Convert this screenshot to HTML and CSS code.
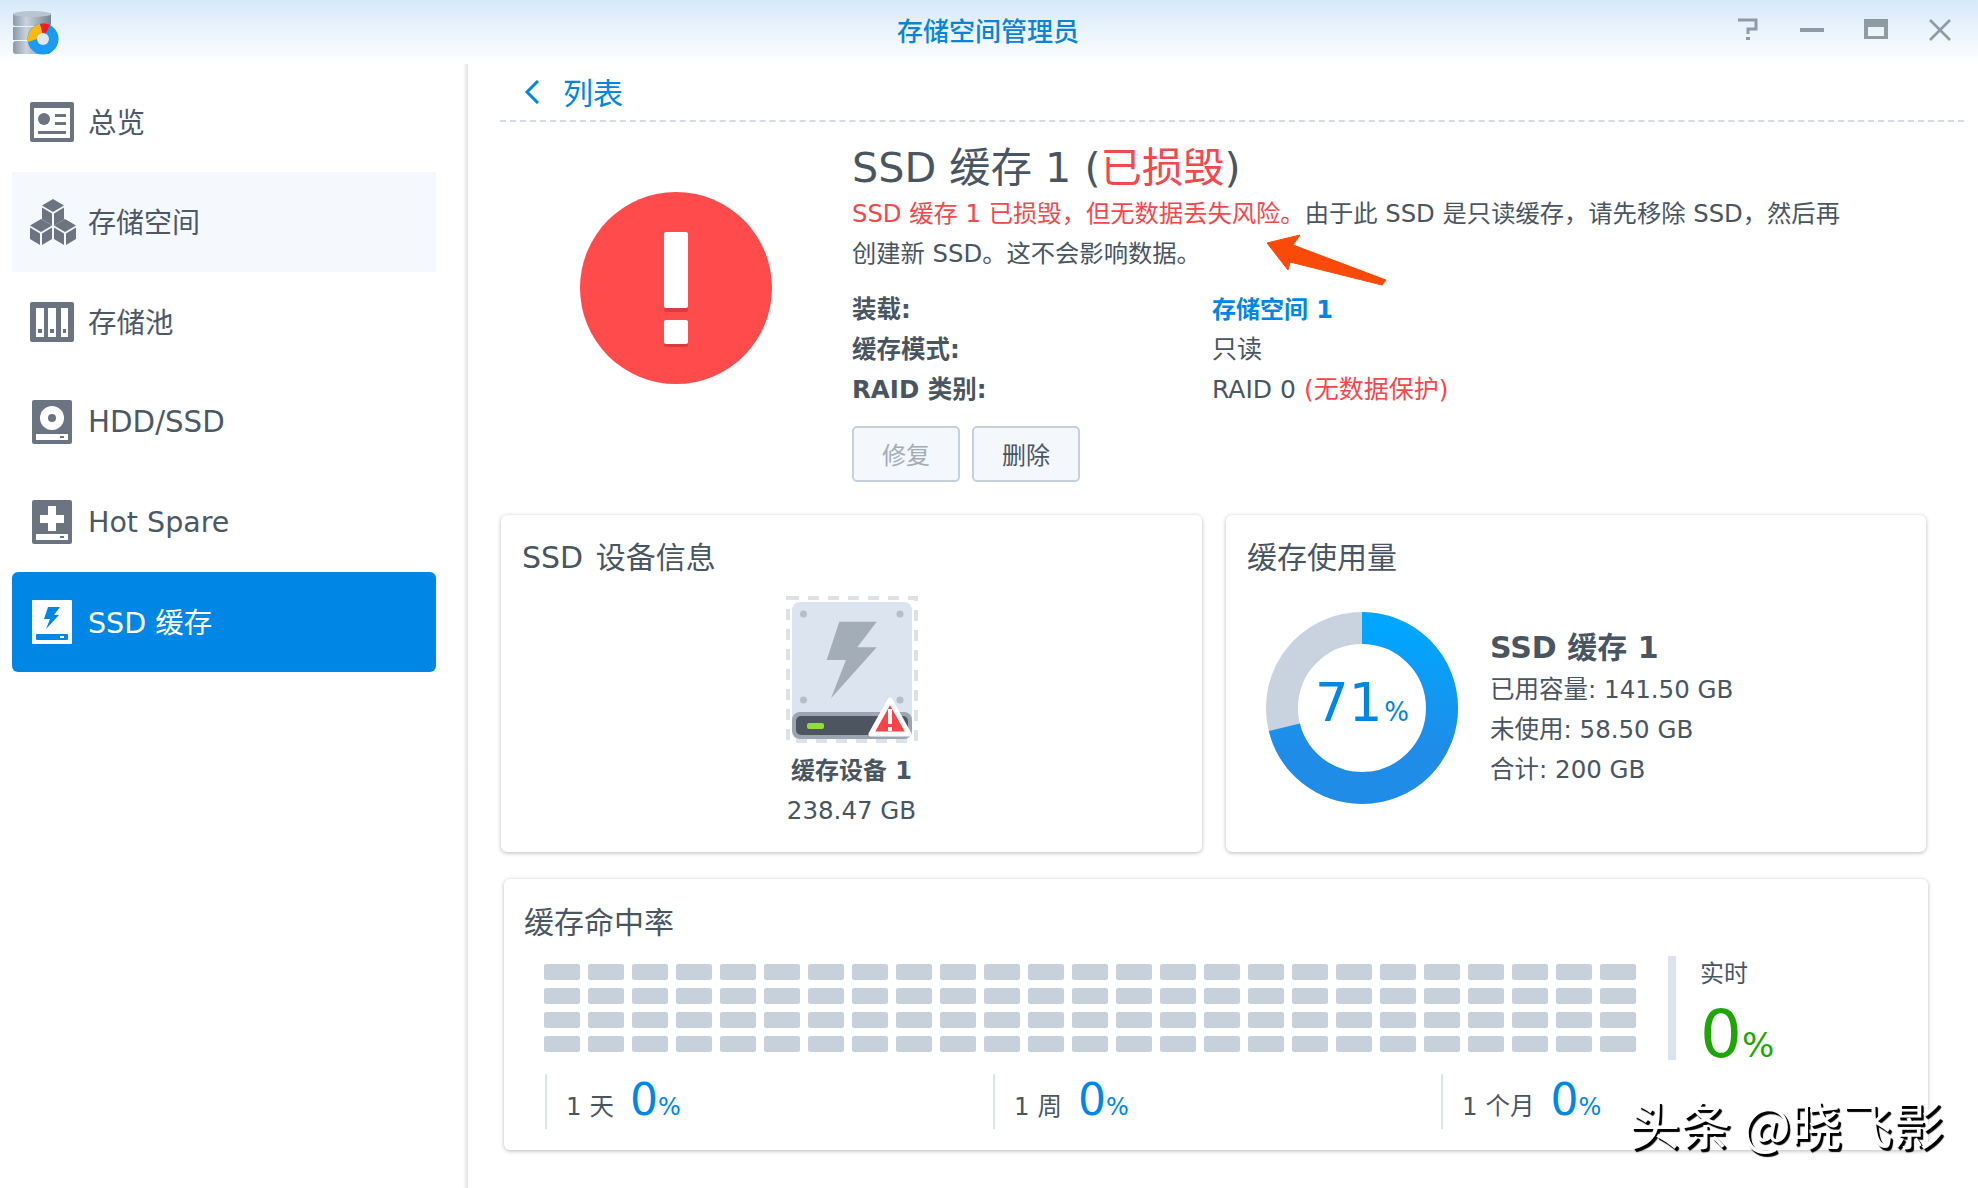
FILE: index.html
```html
<!DOCTYPE html>
<html lang="zh">
<head>
<meta charset="utf-8">
<title>存储空间管理员</title>
<link rel="stylesheet" href="styles.css">
</head>
<body>
<div class="app">
  <header class="titlebar">
    <div class="tb-left">
      <svg class="app-icon" width="46" height="46" viewBox="0 0 46 46">
        <defs><linearGradient id="cyl" x1="0" x2="1" y1="0" y2="0"><stop offset="0" stop-color="#8a98a8"/><stop offset=".35" stop-color="#c9d3dd"/><stop offset="1" stop-color="#76848f"/></linearGradient></defs>
        <rect x="0" y="2" width="38" height="13" rx="2" fill="url(#cyl)"/>
        <ellipse cx="19" cy="3" rx="19" ry="3" fill="#b9c4cf"/>
        <rect x="0" y="16" width="38" height="13" fill="url(#cyl)"/>
        <rect x="0" y="30" width="38" height="13" rx="3" fill="url(#cyl)"/>
        <circle cx="30" cy="28" r="15.5" fill="#189bf0"/>
        <path d="M15 31 A15.5 15.5 0 0 1 27 13 L30 24 Q24 27 24 28 Z" fill="#f9b911"/>
        <path d="M27 13 A15.5 15.5 0 0 1 37 14 L32 24 L30 24 Z" fill="#ee1c25"/>
        <circle cx="30" cy="28" r="6" fill="#dfe8f0"/>
      </svg>
    </div>
    <div class="tb-title">存储空间管理员</div>
    <div class="tb-controls">
      <svg width="24" height="24" viewBox="0 0 24 24"><path d="M2 2 H20 V11 H12 V16" fill="none" stroke="#8f9aa5" stroke-width="3"/><rect x="10" y="19" width="4" height="3" fill="#8f9aa5"/></svg>
      <svg width="24" height="24" viewBox="0 0 24 24"><rect x="0" y="10" width="24" height="4" fill="#8f9aa5"/></svg>
      <svg width="24" height="24" viewBox="0 0 24 24"><path d="M0 1 H24 V21 H0 Z M4 9 V18 H20 V9 Z" fill="#8f9aa5" fill-rule="evenodd"/></svg>
      <svg width="24" height="24" viewBox="0 0 24 24"><path d="M2 2 L22 22 M22 2 L2 22" stroke="#8f9aa5" stroke-width="2.6"/></svg>
    </div>
  </header>

  <div class="body">
    <nav class="sidebar">
      <div class="nav-item nav-cjk">
        <svg class="nav-icon" width="44" height="40" viewBox="0 0 44 40"><rect width="44" height="40" rx="2" fill="#6b7480"/><rect x="4" y="6" width="36" height="30" fill="#fff"/><circle cx="14" cy="17" r="6" fill="#6b7480"/><rect x="25" y="12" width="11" height="3" fill="#6b7480"/><rect x="25" y="20" width="11" height="3" fill="#6b7480"/><rect x="8" y="29" width="28" height="3" fill="#6b7480"/></svg>
        <span>总览</span>
      </div>
      <div class="nav-item nav-hover">
        <svg class="nav-icon" width="46" height="46" viewBox="0 0 46 46">
          <g fill="#6b7480">
            <path d="M23 0 L34 6.5 L23 13 L12 6.5 Z M12 8.5 L22 14.5 L22 26.5 L12 20.5 Z M24 14.5 L34 8.5 L34 20.5 L24 26.5 Z"/>
            <path d="M11 20 L22 26.5 L11 33 L0 26.5 Z M0 28.5 L10 34.5 L10 46 L0 40 Z M12 34.5 L22 28.5 L22 40 L12 46 Z"/>
            <path d="M35 20 L46 26.5 L35 33 L24 26.5 Z M24 28.5 L34 34.5 L34 46 L24 40 Z M36 34.5 L46 28.5 L46 40 L36 46 Z"/>
          </g>
        </svg>
        <span>存储空间</span>
      </div>
      <div class="nav-item nav-cjk">
        <svg class="nav-icon" width="44" height="40" viewBox="0 0 44 40"><rect width="44" height="40" rx="2" fill="#6b7480"/><g fill="#fff"><rect x="6" y="6" width="8" height="29"/><rect x="18" y="6" width="8" height="29"/><rect x="31" y="6" width="7" height="29"/></g><g fill="#6b7480"><rect x="8" y="27" width="4" height="4"/><rect x="20" y="27" width="4" height="4"/><rect x="33" y="27" width="3" height="4"/></g></svg>
        <span>存储池</span>
      </div>
      <div class="nav-item">
        <svg class="nav-icon nav-icon-tall" width="40" height="44" viewBox="0 0 40 44"><rect width="40" height="44" rx="2" fill="#6b7480"/><circle cx="20" cy="18" r="12" fill="#fff"/><circle cx="20" cy="18" r="4" fill="#6b7480"/><rect x="4" y="34" width="32" height="6" fill="#fff"/><rect x="28" y="36" width="4" height="2" fill="#6b7480"/></svg>
        <span class="nav-latin">HDD/SSD</span>
      </div>
      <div class="nav-item">
        <svg class="nav-icon nav-icon-tall" width="40" height="44" viewBox="0 0 40 44"><rect width="40" height="44" rx="2" fill="#6b7480"/><path d="M16 6 H24 V15 H32 V23 H24 V31 H16 V23 H8 V15 H16 Z" fill="#fff"/><rect x="4" y="34" width="32" height="6" fill="#fff"/><rect x="28" y="36" width="4" height="2" fill="#6b7480"/></svg>
        <span>Hot Spare</span>
      </div>
      <div class="nav-item nav-active nav-cjk">
        <svg class="nav-icon nav-icon-tall" width="40" height="44" viewBox="0 0 40 44"><rect width="40" height="44" rx="1" fill="#fff"/><path d="M16 7 H28 L22 15 H27 L14 29 L18 19 H12 Z" fill="#0086e5"/><rect x="4" y="34" width="32" height="6" rx="1" fill="#0086e5"/><rect x="28" y="36" width="4" height="2" fill="#fff"/></svg>
        <span>SSD 缓存</span>
      </div>
    </nav>

    <main class="main">
      <div class="crumb">
        <svg width="18" height="24" viewBox="0 0 18 24"><path d="M15 1 L4 12 L15 23" fill="none" stroke="#0086e5" stroke-width="3"/></svg>
        <span class="crumb-text">列表</span>
      </div>

      <section class="hero">
        <svg class="hero-icon" width="192" height="192" viewBox="0 0 192 192">
          <circle cx="96" cy="96" r="96" fill="#ff4b4b"/>
          <rect x="84" y="40" width="24" height="80" rx="2" fill="#d93b3f"/>
          <rect x="84" y="40" width="24" height="76" rx="2" fill="#fff"/>
          <rect x="84" y="128" width="24" height="27" rx="2" fill="#d93b3f"/>
          <rect x="84" y="128" width="24" height="24" rx="2" fill="#fff"/>
        </svg>
        <div class="hero-text">
          <h1 class="hero-title">SSD 缓存 1 (<span class="red">已损毁</span>)</h1>
          <p class="hero-desc"><span class="red">SSD 缓存 1 已损毁，但无数据丢失风险。</span>由于此 SSD 是只读缓存，请先移除 SSD，然后再<br>创建新 SSD。这不会影响数据。</p>
          <dl class="props">
            <dt>装载:</dt><dd class="link">存储空间 1</dd>
            <dt>缓存模式:</dt><dd>只读</dd>
            <dt>RAID 类别:</dt><dd>RAID 0 <span class="red">(无数据保护)</span></dd>
          </dl>
          <div class="buttons">
            <button class="btn btn-disabled" type="button">修复</button>
            <button class="btn" type="button">删除</button>
          </div>
        </div>
      </section>

      <div class="cards">
        <section class="card card-device">
          <h2 class="card-title card-title-mixed">SSD 设备信息</h2>
          <svg class="drive" width="132" height="147" viewBox="0 0 132 147">
            <rect x="2" y="2" width="128" height="143" fill="none" stroke="#dbe2ea" stroke-width="4" stroke-dasharray="11 9"/>
            <rect x="6" y="6" width="120" height="137" rx="8" fill="#dbe4ef"/>
            <path d="M6 124 a8 8 0 0 1 8 -8 H118 a8 8 0 0 1 8 8 V135 a8 8 0 0 1 -8 8 H14 a8 8 0 0 1 -8 -8 Z" fill="#9aa5b1"/>
            <rect x="10" y="120" width="112" height="19" rx="5" fill="#4c5560"/>
            <rect x="21" y="127" width="17" height="6" rx="2" fill="#8ee02a"/>
            <g fill="#b6bfc9"><circle cx="17.500" cy="18" r="3.500"/><circle cx="114" cy="18" r="3.500"/><circle cx="17.500" cy="104" r="3.500"/><circle cx="114" cy="104" r="3.500"/></g>
            <path d="M53.300 25.700 H90.700 L71.300 51.300 H90.700 L45 102.300 L60 64 H40.700 Z" fill="#a3adb7"/>
            <path d="M104 104 L85 138 H123 Z" fill="#f94548" stroke="#fff" stroke-width="5" stroke-linejoin="round"/>
            <rect x="102" y="113" width="4" height="15" fill="#fff"/>
            <rect x="102" y="131" width="4" height="4" fill="#fff"/>
          </svg>
          <div class="device-name">缓存设备 1</div>
          <div class="device-size">238.47 GB</div>
        </section>

        <section class="card card-usage">
          <h2 class="card-title">缓存使用量</h2>
          <div class="usage">
            <div class="donut">
              <svg width="192" height="192" viewBox="0 0 192 192">
                <defs><linearGradient id="ring" x1="1" x2="0" y1="0" y2="0"><stop offset="0" stop-color="#00a6ff"/><stop offset=".75" stop-color="#1f8de8"/></linearGradient></defs>
                <circle cx="96" cy="96" r="80" fill="none" stroke="#c8d3df" stroke-width="32"/>
                <circle cx="96" cy="96" r="80" fill="none" stroke="url(#ring)" stroke-width="32" stroke-dasharray="356.9 502.7" transform="rotate(-90 96 96)"/>
              </svg>
              <div class="donut-label"><span class="donut-num">71</span><span class="donut-pct">%</span></div>
            </div>
            <div class="usage-info">
              <div class="usage-name">SSD 缓存 1</div>
              <div class="usage-line">已用容量: 141.50 GB</div>
              <div class="usage-line">未使用: 58.50 GB</div>
              <div class="usage-line">合计: 200 GB</div>
            </div>
          </div>
        </section>
      </div>

      <section class="card card-hit">
        <h2 class="card-title">缓存命中率</h2>
        <div class="hit-top">
          <div class="hit-grid">
            <i></i><i></i><i></i><i></i><i></i><i></i><i></i><i></i><i></i><i></i><i></i><i></i><i></i><i></i><i></i><i></i><i></i><i></i><i></i><i></i><i></i><i></i><i></i><i></i><i></i>
            <i></i><i></i><i></i><i></i><i></i><i></i><i></i><i></i><i></i><i></i><i></i><i></i><i></i><i></i><i></i><i></i><i></i><i></i><i></i><i></i><i></i><i></i><i></i><i></i><i></i>
            <i></i><i></i><i></i><i></i><i></i><i></i><i></i><i></i><i></i><i></i><i></i><i></i><i></i><i></i><i></i><i></i><i></i><i></i><i></i><i></i><i></i><i></i><i></i><i></i><i></i>
            <i></i><i></i><i></i><i></i><i></i><i></i><i></i><i></i><i></i><i></i><i></i><i></i><i></i><i></i><i></i><i></i><i></i><i></i><i></i><i></i><i></i><i></i><i></i><i></i><i></i>
          </div>
          <div class="realtime">
            <div class="realtime-label">实时</div>
            <div class="realtime-value"><span class="rt-num">0</span><span class="rt-pct">%</span></div>
          </div>
        </div>
        <div class="hit-stats">
          <div class="stat"><span class="stat-label">1 天</span><span class="stat-num">0</span><span class="stat-pct">%</span></div>
          <div class="stat"><span class="stat-label">1 周</span><span class="stat-num">0</span><span class="stat-pct">%</span></div>
          <div class="stat"><span class="stat-label">1 个月</span><span class="stat-num">0</span><span class="stat-pct">%</span></div>
        </div>
      </section>
    </main>
  </div>

  <svg class="arrow" width="130" height="60" viewBox="0 0 130 60"><path d="M2 13 L35 5 L28 15 L121 50 L117 55 L25 32 L23 40 Z" fill="#f94a0a" stroke="#f94a0a" stroke-linejoin="round"/></svg>
  <div class="watermark">头条 @晓飞影</div>
</div>
</body>
</html>
```

FILE: styles.css
```css
* { box-sizing: border-box; }
html, body { margin: 0; padding: 0; height: 100%; overflow: hidden; background: #fff; }
body {
  font-family: "DejaVu Sans", "Noto Sans CJK SC", sans-serif;
  color: #4a5562;
  font-size: 24.5px;
}
.app { position: relative; width: 1978px; height: 1188px; display: flex; flex-direction: column; }

/* title bar */
.titlebar {
  flex: none;
  height: 64px;
  display: grid;
  grid-template-columns: 1fr auto 1fr;
  align-items: center;
  background: linear-gradient(to bottom, #d6e9f9, #fff);
}
.tb-left { padding-left: 13px; display: flex; }
.app-icon { margin-top: 3px; }
.tb-title { font-size: 26px; color: #0a84d6; font-weight: 500; line-height: 62px; margin-left: -2px; }
.tb-controls { display: flex; justify-content: flex-end; gap: 40px; padding-right: 26px; margin-top: -4px; }

.body { flex: 1; display: flex; min-height: 0; }

/* sidebar */
.sidebar {
  flex: none;
  width: 468px;
  padding: 8px 0 0 12px;
  background: linear-gradient(to right, #fff 463px, #e2e2e2 468px);
}
.nav-item {
  width: 424px;
  height: 100px;
  display: flex;
  align-items: center;
  padding-left: 18px;
  font-size: 28.5px;
  color: #4d5866;
  border-radius: 6px;
}
.nav-item span { margin-left: 14px; }
.nav-cjk span { margin-bottom: 4px; }
.nav-latin { font-size: 29.3px; }
.nav-icon { flex: none; }
.nav-icon-tall { margin-left: 2px; margin-right: 2px; }
.nav-hover { background: #f5f9fe; border-radius: 0; }
.nav-hover .nav-icon { margin-right: -2px; }
.nav-hover span { font-size: 28px; margin-bottom: 2px; }
.nav-active { background: #0086e5; color: #fff; }

/* main */
.main { flex: 1; min-width: 0; padding-left: 32px; }
.crumb {
  height: 58px;
  margin-right: 14px;
  border-bottom: 2px dashed #d5dbe2;
  display: flex;
  align-items: center;
  padding-left: 23px;
  gap: 22px;
  color: #0086e5;
  font-size: 30px;
}
.crumb-text { margin-bottom: 2px; }

.hero { display: flex; height: 361px; }
.hero-icon { flex: none; margin: 70px 80px 0 80px; }
.hero-text { flex: 1; padding-top: 22px; }
.hero-title { margin: 0 0 2px; font-size: 41.3px; font-weight: 400; line-height: 48px; white-space: nowrap; }
.hero-desc { margin: 0; font-size: 24.3px; line-height: 40px; white-space: nowrap; }
.red { color: #f6474b; }
.props { margin: 16px 0 0; display: grid; grid-template-columns: 360px 1fr; line-height: 40px; }
.props dt { font-weight: 700; }
.props dd { margin: 0; font-size: 25px; }
.props .link { color: #0086e5; font-weight: 700; font-size: 24px; }
.buttons { display: flex; gap: 12px; margin-top: 16px; }
.btn {
  width: 108px;
  height: 56px;
  border: 2px solid #c5d0dc;
  border-radius: 5px;
  background: #f4f7fb;
  color: #4a5562;
  font: inherit;
  font-size: 24px;
  padding: 0 0 2px;
}
.btn-disabled { color: #a3acb6; }

/* cards */
.cards { display: flex; gap: 24px; margin: 32px 0 0 1px; }
.card {
  background: #fff;
  border-radius: 6px;
  box-shadow: 0 1px 4px rgba(0, 0, 0, .28);
}
.card-title { margin: 0; font-size: 30px; font-weight: 400; line-height: 40px; }
.card-title-mixed { word-spacing: 3px; }
.card-device { width: 701px; height: 337px; padding: 23px 21px 0; text-align: center; }
.card-device .card-title { text-align: left; }
.drive { display: block; margin: 18px auto 8px; }
.device-name { font-weight: 700; line-height: 40px; font-size: 24px; }
.device-size { line-height: 40px; }

.card-usage { width: 700px; height: 337px; padding: 23px 21px 0; }
.usage { display: flex; margin: 34px 0 0 19px; }
.donut { position: relative; width: 192px; height: 192px; flex: none; }
.donut svg { display: block; }
.donut-label {
  position: absolute;
  inset: 0;
  display: flex;
  align-items: baseline;
  justify-content: center;
  padding-top: 56px;
  color: #0086e5;
}
.donut-num { font-size: 53px; line-height: 70px; }
.donut-pct { font-size: 26px; margin-left: 2px; }
.usage-info { margin: 14px 0 0 32px; }
.usage-name { font-size: 30px; font-weight: 700; line-height: 44px; }
.usage-line { line-height: 40px; }

.card-hit { width: 1424px; height: 271px; margin: 27px 0 0 4px; padding: 24px 0 0 20px; }
.hit-top { display: flex; margin-top: 13px; height: 104px; }
.hit-grid {
  margin: 8px 0 0 20px;
  width: 1092px;
  height: 88px;
  display: grid;
  grid-template-columns: repeat(25, 36px);
  grid-auto-rows: 16px;
  gap: 8px;
}
.hit-grid i { display: block; background: #c6d1dc; border-radius: 2px; }
.realtime { margin-left: 32px; padding-left: 24px; border-left: 8px solid #dbe3ef; }
.realtime-label { line-height: 36px; font-size: 24px; }
.realtime-value { color: #1ea605; display: flex; align-items: baseline; margin-top: 9px; }
.rt-num { font-size: 66px; line-height: 68px; }
.rt-pct { font-size: 34px; }

.hit-stats { display: flex; margin: 14px 0 0 21px; }
.stat {
  width: 448px;
  height: 55px;
  border-left: 2px solid #dbe3ef;
  padding-left: 19px;
  display: flex;
  align-items: baseline;
  line-height: 52px;
}
.stat-label { font-size: 24.5px; margin-right: 16px; }
.stat-num { font-size: 44px; color: #0086e5; }
.stat-pct { font-size: 24px; color: #0086e5; }

/* overlays */
.arrow { position: absolute; left: 1265px; top: 230px; }
.watermark {
  position: absolute;
  left: 1629px;
  top: 1090px;
  font-family: "Noto Sans CJK SC", sans-serif;
  font-size: 51px;
  line-height: 66px;
  white-space: nowrap;
  color: #fff;
  text-shadow: 2px 2px 0 #000, 2.5px 2.5px 1px #000;
}
```
